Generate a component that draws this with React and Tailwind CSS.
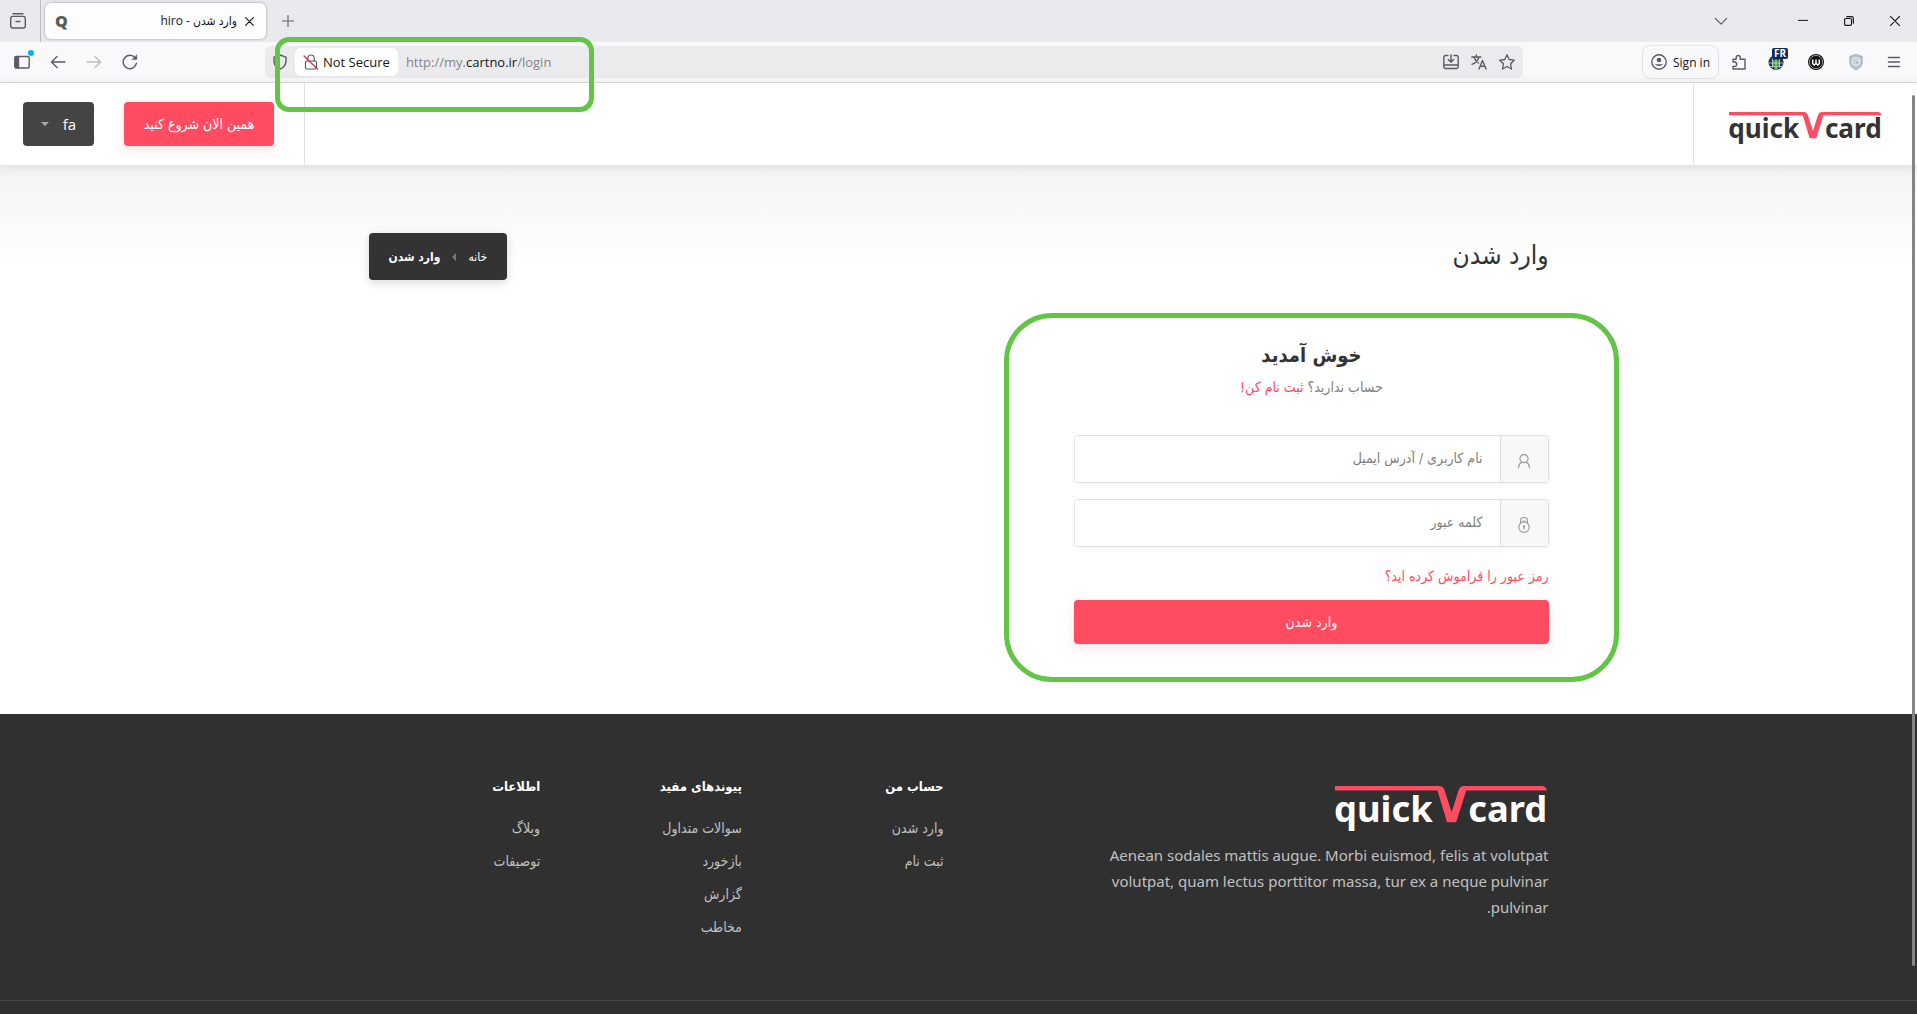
import React, { useState } from 'react';

const footerColumns = [
  { title: 'حساب من', links: ['وارد شدن', 'ثبت نام'] },
  { title: 'پیوندهای مفید', links: ['سوالات متداول', 'بازخورد', 'گزارش', 'مخاطب'] },
  { title: 'اطلاعات', links: ['وبلاگ', 'توصیفات'] }
];

function Icon({ children, className = 'size-4', strokeWidth = 1.4 }) {
  return (
    <svg
      viewBox="0 0 16 16"
      className={className}
      fill="none"
      stroke="currentColor"
      strokeWidth={strokeWidth}
      strokeLinecap="round"
      strokeLinejoin="round"
      aria-hidden="true"
    >
      {children}
    </svg>
  );
}

function Logo({ className, textClass }) {
  return (
    <div className={className}>
      <svg viewBox="0 0 212 46" direction="ltr" className="w-full overflow-visible" role="img" aria-label="quickVcard">
        <path
          d="M0 0H103Q107 0 108.500 4L115.500 26L122.500 4Q124 0 128 0H205Q209 0 210 4.500H130L120 36H111L101.500 4.500H0Z"
          fill="#ff4c61"
        />
        <g className={textClass} fontFamily="'Noto Sans', 'Open Sans', sans-serif" fontWeight="700" fontSize="36">
          <text x="-1" y="36">quick</text>
          <text x="132" y="36">card</text>
        </g>
      </svg>
    </div>
  );
}

function TabBar() {
  return (
    <div className="flex h-[42px] items-center bg-[#eae9ee] text-[#5b5b66]">
      <button aria-label="Tabs" className="flex h-full w-[41px] items-center border-r border-[#bcbbc3] pl-2.5">
        <Icon>
          <path d="M3 .7h10" />
          <rect x=".7" y="3.400" width="14.600" height="11.600" rx="2" />
          <path d="M6 8.500h4" />
        </Icon>
      </button>
      <div className="ml-1 flex h-9 w-[221px] items-center justify-between rounded-md bg-[#fdfdfe] pr-3 pl-2.5 shadow-[0_0_3px_rgba(0,0,0,0.35)]">
        <span className="font-['Open_Sans',sans-serif] text-base leading-6 font-extrabold text-[#5a5a5a]">Q</span>
        <div className="flex items-center gap-2 text-[#15141a]">
          <span dir="rtl" className="text-xs">وارد شدن - hiro</span>
          <button aria-label="Close tab">
            <Icon className="size-[9px]" strokeWidth={2}>
              <path d="M1 1l14 14M15 1L1 15" />
            </Icon>
          </button>
        </div>
      </div>
      <button aria-label="New tab" className="ml-4">
        <Icon className="size-3">
          <path d="M8 .5v15M.5 8h15" />
        </Icon>
      </button>
      <div className="ml-auto flex items-center pr-[17px] text-[#15141a]">
        <button aria-label="List all tabs" className="mr-[70px] text-[#5b5b66]">
          <Icon className="size-3.5">
            <path d="M1.500 5L8 11.500 14.500 5" />
          </Icon>
        </button>
        <button aria-label="Minimize" className="mr-9">
          <Icon className="size-2.5" strokeWidth={1.6}>
            <path d="M0 7h16" />
          </Icon>
        </button>
        <button aria-label="Restore" className="mr-9">
          <Icon className="size-2.5" strokeWidth={1.8}>
            <rect x="1" y="4" width="11" height="11" rx="2" />
            <path d="M4.500 1H12q3 0 3 3v7.500" />
          </Icon>
        </button>
        <button aria-label="Close">
          <Icon className="size-2.5" strokeWidth={1.8}>
            <path d="M.5.5l15 15M15.500.5l-15 15" />
          </Icon>
        </button>
      </div>
    </div>
  );
}

function Toolbar() {
  return (
    <div className="flex h-[41px] items-center border-b border-[#dcdcdf] bg-[#f9f9fb] text-[#5b5b66]">
      <div className="flex w-[265px] items-center gap-5 pl-3.5">
        <button aria-label="Sidebar" className="relative">
          <Icon>
            <rect x=".8" y="2.500" width="14.400" height="11.500" rx="1.500" />
            <path d="M1.500 3h3v10.500h-3z" fill="currentColor" />
          </Icon>
          <span className="absolute -top-1 -right-1 size-1.5 rounded-full bg-[#00b3f4]" />
        </button>
        <button aria-label="Back">
          <Icon>
            <path d="M15 8H1.500M7 2.500L1.500 8 7 13.500" />
          </Icon>
        </button>
        <button aria-label="Forward" className="text-[#bdbdc2]">
          <Icon>
            <path d="M1 8h13.500M9 2.500L14.500 8 9 13.500" />
          </Icon>
        </button>
        <button aria-label="Reload">
          <Icon>
            <path d="M14.500 9.200A6.700 6.700 0 1 1 13 3.600" />
            <path d="M14.800 1v4.600h-4.600z" fill="currentColor" strokeWidth=".5" />
          </Icon>
        </button>
      </div>

      <div className="relative flex h-8 flex-1 items-center rounded-md bg-[#ebebed]">
        <div className="flex w-[30px] justify-center">
          <Icon>
            <path d="M8 1l6 2.200V7c0 4-2.500 6.600-6 8.200C4.500 13.600 2 11 2 7V3.200z" />
          </Icon>
        </div>
        <button className="flex h-7 items-center gap-1 rounded-md bg-white px-2 text-[13px] text-[#5b5b66]">
          <Icon strokeWidth={1.2}>
            <path d="M4 7h8q1.500 0 1.500 1.500v5q0 1.500-1.500 1.500H4q-1.500 0-1.500-1.500v-5Q2.500 7 4 7M4.800 7V4.200a3.200 3.200 0 0 1 6.400 0V7" />
            <path d="M1 2l13.500 13" stroke="#e22850" />
          </Icon>
          <span className="pt-0.5 text-[#15141a]">Not Secure</span>
        </button>
        <p dir="ltr" className="ml-2 pt-0.5 text-[13px] text-[#84848b]">
          http://my.<span className="text-[#15141a]">cartno.ir</span>/login
        </p>
        <div className="ml-auto flex items-center gap-3 pr-2">
          <button aria-label="Install">
            <Icon>
              <path d="M5 1.500H2.500q-1.700 0-1.700 1.700v9.600q0 1.700 1.700 1.700h11q1.700 0 1.700-1.700V3.200q0-1.700-1.700-1.700H11M1 11h14M8 .7V8M5.300 5.500L8 8.200l2.700-2.700" />
            </Icon>
          </button>
          <button aria-label="Translate">
            <Icon>
              <path d="M.8 3h9M5.300 1v2M8 3C7 6.500 4.500 9 1 10.300M2.800 3C4 6 5.500 7.800 7.500 9M8 15l3.500-8.500L15 15M9.300 12.200h4.500" />
            </Icon>
          </button>
          <button aria-label="Bookmark">
            <Icon strokeWidth={1.3}>
              <path d="M8 .8l2.200 4.700 5.100.7-3.700 3.600.9 5.200L8 12.500 3.500 15l.9-5.200L.7 6.200l5.100-.7z" />
            </Icon>
          </button>
        </div>
        {/* highlight over the address */}
        <div className="pointer-events-none absolute -top-[9px] left-2.5 z-20 h-[75px] w-[319px] rounded-[14px] border-5 border-[#62c546]" />
      </div>

      <div className="flex items-center pr-[15px]">
        <button className="ml-[119px] flex h-[34px] items-center gap-1.5 rounded-lg border border-[#e2e2e6] px-2 text-xs text-[#15141a]">
          <span className="text-[#5b5b66]">
            <Icon>
              <circle cx="8" cy="8" r="7.200" />
              <circle cx="8" cy="6" r="2.300" fill="currentColor" stroke="none" />
              <path d="M3.800 10.200h8.400a5 4 0 0 1-8.400 0z" fill="currentColor" stroke="none" />
            </Icon>
          </span>
          <span className="pt-0.5">Sign in</span>
        </button>
        <button aria-label="Extensions" className="ml-3">
          <Icon>
            <path d="M2 8V5.200h3.200V3.500a2 2 0 0 1 4 0v1.700H14V15H2v-2.600h1.500a2.100 2.100 0 0 0 0-4.400z" />
          </Icon>
        </button>
        <button aria-label="VPN location" className="relative ml-[21px]">
          <svg viewBox="0 0 16 16" className="size-4" aria-hidden="true">
            <circle cx="8" cy="8.500" r="7.500" fill="#27304f" />
            <path d="M4 6h8v6H4zM6 13h4v2H6z" fill="#3da048" />
            <path d="M1 9h14M8 1v15M2 12.500h12M4.500 3v11M11.500 3v11" stroke="#cfe3d6" strokeWidth=".7" />
          </svg>
          <span className="absolute -top-1.5 left-1 rounded-xs bg-[#12284e] px-0.5 text-[10px] leading-[11px] font-bold text-white">FR</span>
        </button>
        <button aria-label="Windscribe" className="ml-6">
          <svg viewBox="0 0 16 16" className="size-4" aria-hidden="true">
            <circle cx="8" cy="8" r="8" fill="#111" />
            <circle cx="8" cy="8" r="6.600" fill="none" stroke="#ccc" strokeWidth=".7" />
            <path d="M4.700 5.500V9.700l1.600 1.300L8 9.300l1.700 1.700 1.600-1.300V5.500M8 5.500v3.800" fill="none" stroke="#fff" strokeWidth="1.500" />
          </svg>
        </button>
        <button aria-label="Ad blocker" className="ml-6">
          <svg viewBox="0 0 16 16" className="size-4" aria-hidden="true">
            <path d="M8 .3l6.300 2V8c0 4-2.700 6.300-6.300 7.800C4.400 14.300 1.700 12 1.700 8V2.300z" fill="#b4c0d0" stroke="#97a5b8" strokeWidth=".6" />
            <circle cx="8" cy="7.500" r="3.800" fill="none" stroke="#eef2f7" strokeWidth="1.300" />
            <path d="M8 9a1.600 1.600 0 1 1 1.600-1.600L11 6" fill="none" stroke="#eef2f7" strokeWidth="1" />
          </svg>
        </button>
        <button aria-label="Menu" className="ml-[22px]">
          <Icon>
            <path d="M2.500 3.500h11M2.500 8h11M2.500 12.500h11" />
          </Icon>
        </button>
      </div>
    </div>
  );
}

function SiteHeader() {
  return (
    <header className="relative z-10 flex h-[82px] bg-white shadow-[0_2px_12px_rgba(0,0,0,0.1)]">
      <a href="#home" className="flex w-56 items-center justify-center border-l border-[#e0e0e0] pt-2.5">
        <Logo className="w-[154px]" textClass="fill-[#333]" />
      </a>
      <div className="mr-auto flex items-center gap-[30px] border-r border-[#e0e0e0] pr-[30px] pl-[23px]">
        <a
          href="#start"
          className="flex h-11 w-[150px] items-center justify-center rounded bg-[#ff4c61] text-sm text-white shadow-[0_4px_12px_rgba(255,76,97,0.15)]"
        >
          همین الان شروع کنید
        </a>
        <button className="flex h-11 w-[71px] items-center justify-center gap-3.5 rounded bg-[#444] font-['Open_Sans',sans-serif] text-[15px] text-white">
          fa
          <span className="border-x-4 border-t-4 border-x-transparent border-t-[#aaa]" />
        </button>
      </div>
    </header>
  );
}

function Field({ id, type, label, value, onChange, children }) {
  return (
    <div className="mb-4 flex h-12 overflow-hidden rounded border border-[#e0e0e0] shadow-[0_1px_4px_rgba(0,0,0,0.06)]">
      <label htmlFor={id} aria-label={label} className="flex w-12 items-center justify-center border-l border-[#e0e0e0] bg-[#f8f8f8] pt-1 text-[#a0a0a0]">
        {children}
      </label>
      <input
        id={id}
        type={type}
        placeholder={label}
        value={value}
        onChange={(e) => onChange(e.target.value)}
        className="min-w-0 flex-1 bg-white px-[17px] pb-0.5 text-sm outline-none placeholder:text-[#808080]"
      />
    </div>
  );
}

function LoginForm() {
  const [username, setUsername] = useState('');
  const [password, setPassword] = useState('');

  return (
    <form className="relative" onSubmit={(e) => e.preventDefault()}>
      <div className="mb-[34px] text-center">
        <h3 className="text-xl leading-9 font-bold text-[#333]">خوش آمدید</h3>
        <p className="text-sm leading-[28px] text-[#808080]">
          حساب ندارید؟ <a href="#signup" className="text-[#ff4c61]">ثبت نام کن!</a>
        </p>
      </div>
      <Field id="username" type="text" label="نام کاربری / آدرس ایمیل" value={username} onChange={setUsername}>
        <Icon strokeWidth={1.3}>
          <circle cx="8" cy="5.500" r="4" />
          <path d="M2.500 14.500c.3-3 1.700-4.600 3.300-5.300M13.500 14.500c-.3-3-1.700-4.600-3.300-5.300" />
        </Icon>
      </Field>
      <Field id="password" type="password" label="کلمه عبور" value={password} onChange={setPassword}>
        <Icon strokeWidth={1.2}>
          <circle cx="8" cy="10.200" r="5.200" />
          <path d="M4.500 6.500V4a3.500 3.500 0 0 1 7 0v2.500M6.200 4.500q1.800-1 3.600 0M8 9.500v2.500" />
          <circle cx="8" cy="9.500" r=".7" />
        </Icon>
      </Field>
      <a href="#forgot" className="block pb-2.5 text-sm leading-[27px] text-[#ff4c61]">رمز عبور را فراموش کرده اید؟</a>
      <button
        type="submit"
        className="h-11 w-full rounded bg-[#ff4c61] text-sm text-white shadow-[0_4px_12px_rgba(255,76,97,0.15)]"
      >
        وارد شدن
      </button>
      {/* highlight around the form */}
      <div className="pointer-events-none absolute -inset-x-[70px] -top-6 -bottom-[38px] rounded-[48px] border-5 border-[#62c546]" />
    </form>
  );
}

function Footer() {
  return (
    <footer className="flex-1 bg-[#303030] pt-[61px]">
      <div className="mx-auto grid max-w-[1210px] grid-cols-12 pb-14">
        <div className="col-span-5 px-[15px]">
          <Logo className="mt-[11px] mb-2.5 w-[214px]" textClass="fill-white" />
          <p className="font-['Noto_Sans','Open_Sans',sans-serif] text-[15px] leading-[26px] text-[#c0c0c0]">
            Aenean sodales mattis augue. Morbi euismod, felis at volutpat volutpat, quam lectus porttitor massa, tur ex a neque pulvinar pulvinar.
          </p>
        </div>
        <div className="col-span-1" />
        {footerColumns.map((col) => (
          <div key={col.title} className="col-span-2 px-[15px]">
            <h4 className="mb-[13px] text-[13px] leading-6 font-bold text-white">{col.title}</h4>
            <ul>
              {col.links.map((link) => (
                <li key={link} className="text-sm leading-[33px]">
                  <a href="#footer" className="text-[#c0c0c0]">{link}</a>
                </li>
              ))}
            </ul>
          </div>
        ))}
      </div>
      <div className="h-3 border-t border-[#484848]" />
    </footer>
  );
}

export default function App() {
  return (
    <div className="flex min-h-screen flex-col bg-white font-['Open_Sans','DejaVu_Sans_Condensed','DejaVu_Sans',sans-serif]">
      <TabBar />
      <Toolbar />
      <div dir="rtl" className="relative flex flex-1 flex-col font-['DejaVu_Sans_Condensed','DejaVu_Sans',sans-serif]">
        <SiteHeader />
        <div className="bg-linear-to-b from-[#f4f4f4] to-white to-90%">
          <div className="mx-auto flex max-w-[1210px] items-center justify-between px-[15px] pt-[68px]">
            <h2 className="pb-1 text-[26px] leading-9 text-[#333]">وارد شدن</h2>
            <nav className="flex h-[47px] items-center gap-3 rounded bg-[#333] px-5 text-xs text-white shadow-[0_3px_10px_rgba(0,0,0,0.15)]">
              <a href="#home">خانه</a>
              <span className="border-y-4 border-r-4 border-y-transparent border-r-[#777]" />
              <span className="font-bold">وارد شدن</span>
            </nav>
          </div>
        </div>
        <main className="mx-auto grid w-full max-w-[1210px] grid-cols-12 pt-[57px] pb-[70px]">
          <div className="col-span-5 px-[15px]">
            <LoginForm />
          </div>
        </main>
        <Footer />
        <div className="absolute top-3 right-0.5 bottom-12 z-20 w-[3px] rounded-full bg-[#858585]" />
      </div>
    </div>
  );
}
